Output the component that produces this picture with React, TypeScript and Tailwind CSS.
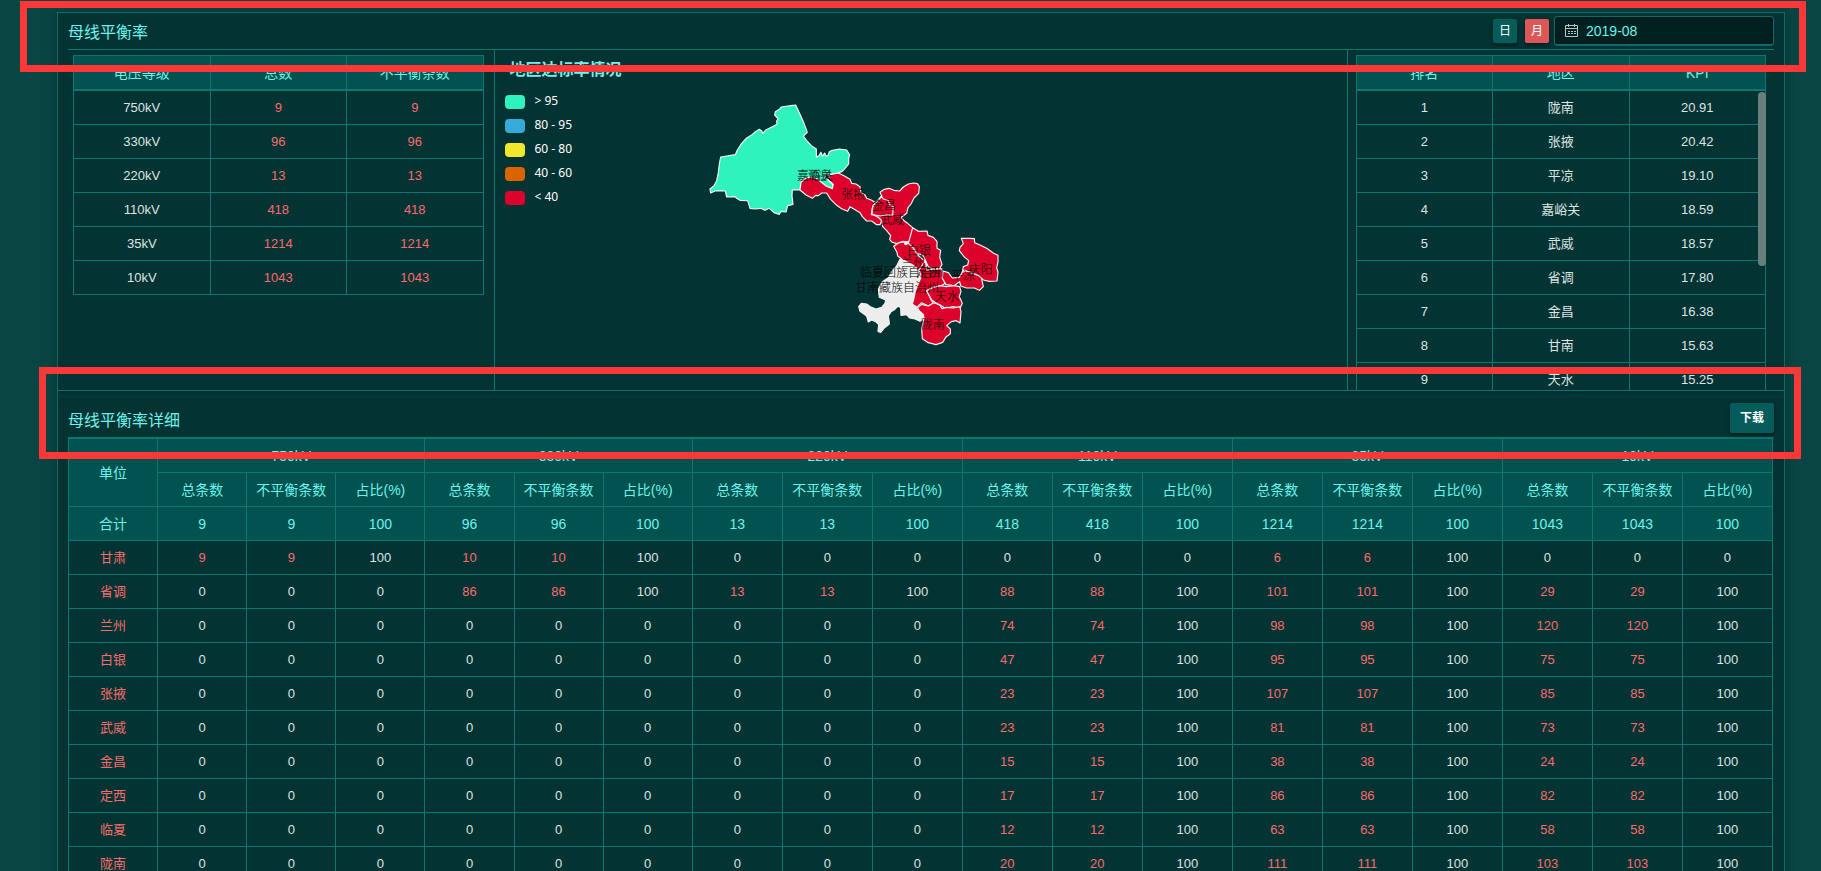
import { useState } from "react";

const voltageRows: [string, number, number][] = [
  ["750kV", 9, 9],
  ["330kV", 96, 96],
  ["220kV", 13, 13],
  ["110kV", 418, 418],
  ["35kV", 1214, 1214],
  ["10kV", 1043, 1043],
];

const rankRows: [number, string, string][] = [
  [1, "陇南", "20.91"],
  [2, "张掖", "20.42"],
  [3, "平凉", "19.10"],
  [4, "嘉峪关", "18.59"],
  [5, "武威", "18.57"],
  [6, "省调", "17.80"],
  [7, "金昌", "16.38"],
  [8, "甘南", "15.63"],
  [9, "天水", "15.25"],
];

const levels = ["750kV", "330kV", "220kV", "110kV", "35kV", "10kV"];

const totals = [9, 96, 13, 418, 1214, 1043];

const detailRows: [string, number[]][] = [
  ["甘肃", [9, 10, 0, 0, 6, 0]],
  ["省调", [0, 86, 13, 88, 101, 29]],
  ["兰州", [0, 0, 0, 74, 98, 120]],
  ["白银", [0, 0, 0, 47, 95, 75]],
  ["张掖", [0, 0, 0, 23, 107, 85]],
  ["武威", [0, 0, 0, 23, 81, 73]],
  ["金昌", [0, 0, 0, 15, 38, 24]],
  ["定西", [0, 0, 0, 17, 86, 82]],
  ["临夏", [0, 0, 0, 12, 63, 58]],
  ["陇南", [0, 0, 0, 20, 111, 103]],
];

const legend = [
  { label: "> 95", color: "bg-[#2ff3bd]" },
  { label: "80 - 95", color: "bg-[#36abd9]" },
  { label: "60 - 80", color: "bg-[#f0e62e]" },
  { label: "40 - 60", color: "bg-[#da6400]" },
  { label: "< 40", color: "bg-[#dc022b]" },
];

const mapLabels: [string, number, number][] = [
  ["嘉峪关", 345, 255],
  ["酒泉", 360, 255],
  ["张掖", 460, 314],
  ["金昌", 552, 346],
  ["武威", 577, 387],
  ["白银", 657, 481],
  ["兰州", 640, 517],
  ["临夏回族自治州", 606, 548],
  ["定西", 685, 548],
  ["平凉", 790, 555],
  ["庆阳", 842, 539],
  ["甘南藏族自治州", 591, 593],
  ["天水", 740, 619],
  ["陇南", 698, 704],
];

const cell = "border border-[#0c7672] p-0 text-center font-normal";

function GansuMap() {
  return (
    <svg
      viewBox="0 0 930 780"
      className="h-[260px] w-[310px]"
      role="img"
      aria-label="地区达标率情况"
    >
      <g stroke="#f4f4f4" strokeWidth="3.5" strokeLinejoin="round">
        <path
          fill="#2ff3bd"
          d="M30 297 42 287 50 272 55 248 58 222 62 201 106 194 112 180 125 160 140 144 155 135 164 127 178 118 186 124 188 131 197 120 217 110 231 103 230 93 234 86 224 75 226 65 238 58 244 51 272 47 287 45 298 68 312 100 322 127 310 138 320 152 334 167 349 177 349 201 357 197 363 187 367 199 374 189 378 198 384 197 388 185 394 182 418 177 440 180 449 195 446 205 446 222 437 233 427 244 410 250 390 254 372 260 398 283 397 296 378 288 358 272 345 263 320 262 305 275 300 300 277 299 276 318 279 343 263 347 258 366 243 364 238 373 222 368 208 355 195 361 182 355 165 357 150 355 143 332 120 331 110 325 105 320 80 321 76 303 62 302 45 303 32 309Z"
        />
        <path
          fill="#dc022b"
          d="M300 300 303 277 320 262 345 263 358 272 378 288 397 296 400 283 384 268 390 254 415 249 432 257 450 268 455 280 468 282 480 290 483 307 495 315 500 325 515 331 527 338 518 350 516 372 534 381 545 391 540 404 530 404 515 393 500 393 487 380 480 368 463 358 450 350 443 364 425 356 408 344 392 328 380 309 365 309 355 317 347 316 337 325 318 315Z"
        />
        <path
          fill="#dc022b"
          d="M527 338 545 318 540 307 553 298 567 295 582 301 599 303 610 291 625 282 640 279 652 281 658 290 656 310 642 324 633 342 624 353 620 370 604 382 612 392 623 400 638 413 636 435 625 460 610 454 590 461 575 456 569 448 572 437 560 422 548 410 545 391 534 381 516 372 518 350Z"
        />
        <path
          fill="none"
          d="M527 338 545 319 550 327 564 331 570 345 580 350 578 375 556 374 543 378 514 374 518 350Z"
        />
        <path
          fill="#ededed"
          d="M600 508 620 507 640 520 660 540 664 560 655 580 646 604 641 628 640 647 658 663 670 673 672 686 660 694 645 687 629 684 620 674 603 676 602 653 594 648 582 660 573 665 565 678 567 691 568 702 552 715 542 727 534 724 536 704 527 695 515 690 505 696 500 678 480 664 476 650 484 640 500 642 511 650 528 657 545 652 555 640 557 630 538 622 535 598 547 575 565 563 577 542 590 528Z"
        />
        <path
          fill="#dc022b"
          d="M581 469 597 458 622 455 637 470 653 495 668 508 680 515 680 530 657 540 637 524 606 508 593 498 591 487Z"
        />
        <path
          fill="#dc022b"
          d="M638 413 655 424 681 423 684 436 700 442 711 454 711 475 722 481 719 501 726 523 719 535 703 538 685 530 676 511 668 495 652 491 640 474 625 460Z"
        />
        <path
          fill="#dc022b"
          d="M676 511 680 540 703 538 726 536 729 561 738 578 724 587 700 592 680 602 691 625 700 640 685 648 665 638 650 652 637 642 641 628 646 604 655 580 664 560 657 540Z"
        />
        <path
          fill="#dc022b"
          d="M729 543 745 548 757 564 778 562 787 546 805 543 830 550 843 558 850 590 838 601 823 594 800 594 782 588 779 575 762 587 738 584 727 565Z"
        />
        <path
          fill="#dc022b"
          d="M784 445 809 445 823 446 824 458 840 465 860 475 881 490 894 496 894 515 890 534 894 546 891 573 868 574 850 570 836 557 805 545 792 540 787 546 790 530 803 525 806 512 792 500 778 482 780 472 790 461Z"
        />
        <path
          fill="#dc022b"
          d="M680 602 700 592 724 587 738 590 762 587 779 590 783 604 778 620 787 640 780 655 760 650 735 655 722 646 710 640 695 630Z"
        />
        <path
          fill="#dc022b"
          d="M653 653 665 643 685 648 702 638 720 646 726 656 740 652 760 654 779 650 783 665 780 699 769 692 754 695 740 707 751 717 751 731 737 742 728 757 708 764 685 758 667 746 665 716 668 702 672 686 670 673 658 663Z"
        />
        <circle cx="618" cy="460" r="4" fill="#f4f4f4" />
      </g>
      <g
        fill="#000000"
        fontSize="36"
        fontWeight="300"
        textAnchor="middle"
        fontFamily="'Noto Sans CJK SC', sans-serif"
      >
        {mapLabels.map(([name, x, y]) => (
          <text key={name} x={x} y={y + 14}>
            {name}
          </text>
        ))}
      </g>
    </svg>
  );
}

function CalendarIcon() {
  return (
    <svg viewBox="0 0 13 13" className="h-[13px] w-[13px] shrink-0" fill="none" stroke="#bcc4c4" aria-hidden="true">
      <path d="M.5 1.5h12v11H.5zM.5 4.5h12M3.5 0v3M9.5 0v3" />
      <path d="M3 7.5h8M3 9.5h8" strokeDasharray="2 1" />
    </svg>
  );
}

function HeadRow({ labels }: { labels: string[] }) {
  return (
    <thead className="bg-[#02524f] text-sm text-[#6cf2ec]">
      <tr className="h-[34px]">
        {labels.map((label) => (
          <th key={label} className={cell}>
            {label}
          </th>
        ))}
      </tr>
    </thead>
  );
}

function Count({ value }: { value: number }) {
  return (
    <td className={value > 0 ? `${cell} text-[#f56c6c]` : cell}>{value}</td>
  );
}

export default function App() {
  const [mode, setMode] = useState("月");
  const [month, setMonth] = useState("2019-08");

  return (
    <div className="relative h-screen overflow-hidden bg-[#084543] pt-3 pr-9 pl-[57px] font-['Liberation_Sans','Noto_Sans_CJK_SC',sans-serif] text-[13px] leading-[18px] text-[#dde3e3]">
      <main className="border border-[#0b6b68] bg-[#043333] shadow-[0_0_10px_rgba(0,0,0,0.25)]">
        <section>
          <div className="px-[10px]">
            <header className="flex h-[37px] items-center justify-between border-b border-[#0c7672]">
              <h2 className="pt-[3px] text-base text-[#6cf2ec]">母线平衡率</h2>
              <div className="flex items-center gap-2">
                {["日", "月"].map((m) => (
                  <button
                    key={m}
                    type="button"
                    onClick={() => setMode(m)}
                    className={
                      m === mode
                        ? "size-6 rounded-xs bg-[#dc5858] text-xs text-white shadow-[0_2px_4px_rgba(0,0,0,0.4)]"
                        : "size-6 rounded-xs bg-[#065c5b] text-xs text-white shadow-[0_2px_4px_rgba(0,0,0,0.4)]"
                    }
                  >
                    {m}
                  </button>
                ))}
                <label className="-ml-[3px] flex h-[30px] w-[220px] items-center gap-2 rounded border border-b-2 border-[#0c6b68] bg-[#022222] pl-[10px] shadow-[inset_0_0_6px_rgba(0,0,0,0.5)]">
                  <CalendarIcon />
                  <input
                    type="text"
                    aria-label="月份"
                    value={month}
                    onChange={(e) => setMonth(e.target.value)}
                    className="w-full min-w-0 bg-transparent text-sm text-[#6cf2ec] outline-none"
                  />
                </label>
              </div>
            </header>

            <div className="grid h-[340px] grid-cols-4 overflow-hidden">
              <div className="border-r border-[#0c7672] pt-[5px] pr-[10px] pl-[5px]">
                <table className="w-full table-fixed border-collapse">
                  <HeadRow labels={["电压等级", "总数", "不平衡条数"]} />
                </table>
                <table className="w-full table-fixed border-collapse">
                  <tbody>
                    {voltageRows.map(([level, total, unbalanced]) => (
                      <tr key={level} className="h-[34px]">
                        <td className={cell}>{level}</td>
                        <Count value={total} />
                        <Count value={unbalanced} />
                      </tr>
                    ))}
                  </tbody>
                </table>
              </div>

              <div className="col-span-2 flex border-r border-[#0c7672] pl-[10px]">
                <div className="w-[195px] pt-2">
                  <h3 className="pl-[5px] text-base leading-6 font-bold text-[#6cf2ec]">
                    地区达标率情况
                  </h3>
                  <ul className="pt-2 font-['Noto_Sans',sans-serif] text-xs text-white">
                    {legend.map(({ label, color }) => (
                      <li key={label} className="flex h-6 items-center gap-[10px]">
                        <span className={`h-[14px] w-5 rounded ${color}`} />
                        <span className="pb-[2px]">{label}</span>
                      </li>
                    ))}
                  </ul>
                </div>
                <div className="pt-10">
                  <GansuMap />
                </div>
              </div>

              <div className="px-2 pt-[5px]">
                <table className="w-full table-fixed border-collapse">
                  <HeadRow labels={["排名", "地区", "KPI"]} />
                </table>
                <div className="relative">
                  <table className="w-full table-fixed border-collapse">
                    <tbody>
                      {rankRows.map(([rank, area, kpi]) => (
                        <tr key={rank} className="h-[34px]">
                          <td className={cell}>{rank}</td>
                          <td className={cell}>{area}</td>
                          <td className={cell}>{kpi}</td>
                        </tr>
                      ))}
                    </tbody>
                  </table>
                  <div className="absolute top-[2px] right-0 h-[174px] w-2 rounded-full bg-[#677f7d]" />
                </div>
              </div>
            </div>
          </div>
        </section>

        <section className="border-t border-[#0c7672]">
          <div className="h-[10px] bg-linear-to-b from-[#032c2d] via-[#043838] to-[#032f30]" />
          <div className="px-[10px]">
            <header className="flex h-[37px] items-center justify-between border-b border-[#0c7672]">
              <h2 className="pt-[3px] text-base text-[#6cf2ec]">母线平衡率详细</h2>
              <button
                type="button"
                className="mb-[2px] h-[30px] w-11 rounded-xs bg-[#065c5b] text-xs font-bold text-white shadow-[0_2px_4px_rgba(0,0,0,0.4)]"
              >
                下载
              </button>
            </header>
            <div className="pr-px">
              <table className="w-full table-fixed border-collapse">
                <colgroup>
                  <col span={7} className="w-[5.23%]" />
                  <col span={12} />
                </colgroup>
                <thead className="bg-[#02524f] text-sm text-[#6cf2ec]">
                  <tr className="h-[34px]">
                    <th rowSpan={2} className={cell}>
                      单位
                    </th>
                    {levels.map((level) => (
                      <th key={level} colSpan={3} className={cell}>
                        {level}
                      </th>
                    ))}
                  </tr>
                  <tr className="h-[34px]">
                    {levels.flatMap((level) =>
                      ["总条数", "不平衡条数", "占比(%)"].map((label) => (
                        <th key={level + label} className={cell}>
                          {label}
                        </th>
                      )),
                    )}
                  </tr>
                  <tr className="h-[34px]">
                    <th className={cell}>合计</th>
                    {totals.flatMap((total, i) =>
                      [total, total, 100].map((value, j) => (
                        <td key={`${i}-${j}`} className={cell}>
                          {value}
                        </td>
                      )),
                    )}
                  </tr>
                </thead>
                <tbody>
                  {detailRows.map(([unit, counts]) => (
                    <tr key={unit} className="h-[34px]">
                      <th className={`${cell} text-[#f56c6c]`}>{unit}</th>
                      {counts.flatMap((count, i) => [
                        <Count key={`${i}-total`} value={count} />,
                        <Count key={`${i}-unbalanced`} value={count} />,
                        <td key={`${i}-ratio`} className={cell}>
                          {count > 0 ? 100 : 0}
                        </td>,
                      ])}
                    </tr>
                  ))}
                </tbody>
              </table>
            </div>
          </div>
        </section>
      </main>

      <div className="pointer-events-none absolute top-px right-[15px] left-5 h-[71px] border-[7px] border-[#fc3737]" />
      <div className="pointer-events-none absolute top-[367px] right-5 left-[39px] h-[92px] border-[7px] border-[#fc3737]" />
    </div>
  );
}
